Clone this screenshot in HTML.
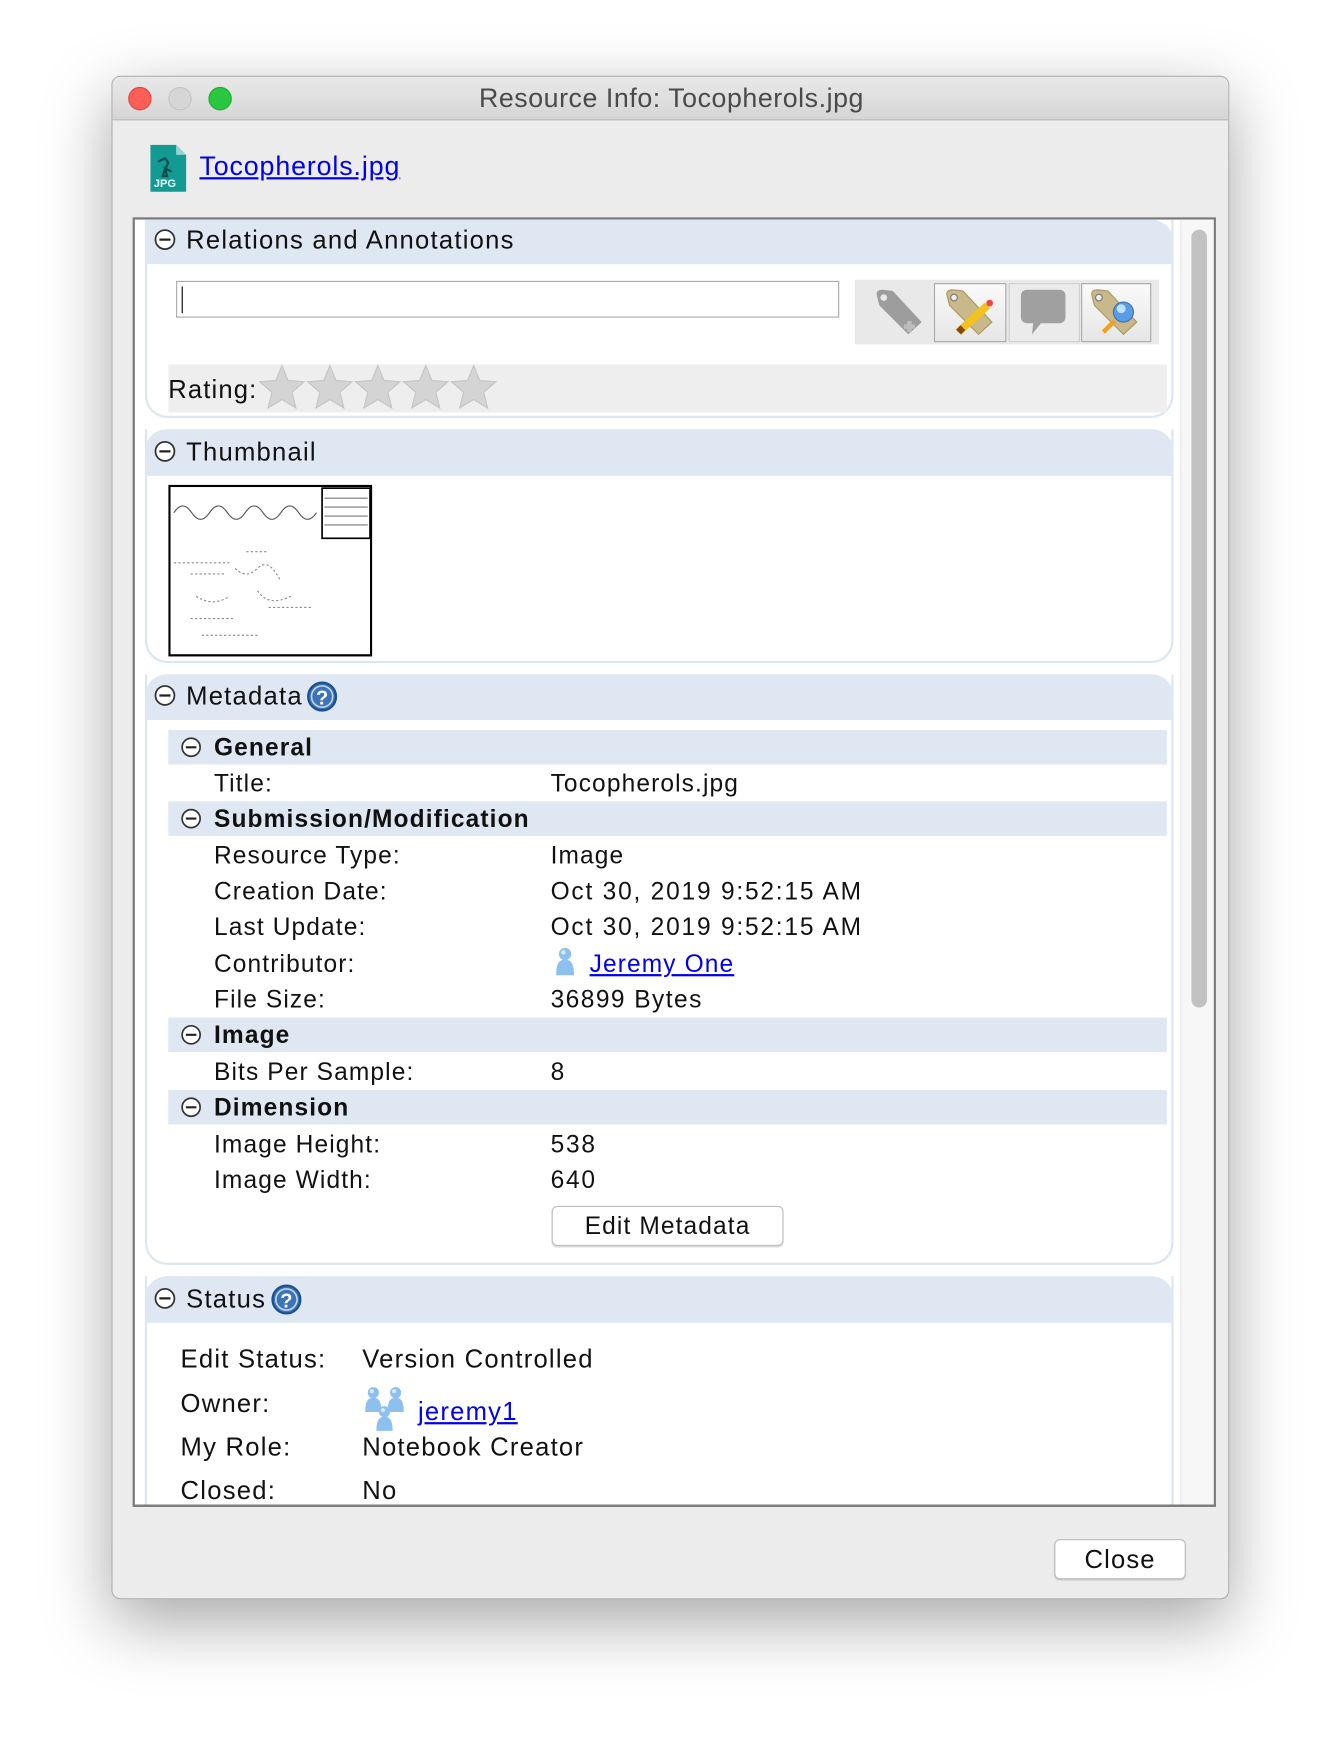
<!DOCTYPE html>
<html><head><meta charset="utf-8">
<style>
html,body{margin:0;padding:0;background:#fff;width:1340px;height:1746px;overflow:hidden}
#s{position:absolute;left:0;top:0;width:1200px;height:1564px;transform:scale(1.1145);transform-origin:0 0;font-family:"Liberation Sans","DejaVu Sans",sans-serif;color:#111}
.a{position:absolute}
.win{left:100px;top:68px;width:1003px;height:1367px;background:#ececec;border:1px solid #b0b0b0;border-radius:8px;box-shadow:0 20px 60px rgba(0,0,0,.35);box-sizing:border-box;overflow:hidden}
.tb{left:0;top:0;width:1003px;height:39px;background:linear-gradient(#e9e9e9,#d5d5d5);border-bottom:1px solid #b5b5b5;box-sizing:border-box}
.tl{width:21px;height:21px;border-radius:50%;top:9px}
.t{font-size:22px;white-space:nowrap;letter-spacing:1px}
.h{font-size:23px;letter-spacing:1.1px}
.hdr{background:#dfe8f2}
.bd{font-weight:bold}
a{color:#0000ee;text-decoration:underline}
.btn{background:#fff;border:1px solid #bdbdbd;border-radius:5px;box-shadow:0 1px 1px rgba(0,0,0,.15);box-sizing:border-box;text-align:center}
</style></head><body><div id="s">
<div class="a win">
 <div class="a tb">
  <div class="a tl" style="left:14px;background:#fc5f57;border:1px solid #e0443e;box-sizing:border-box"></div>
  <div class="a tl" style="left:50px;background:#d6d6d6;border:1px solid #c4c4c4;box-sizing:border-box"></div>
  <div class="a tl" style="left:86px;background:#29c740;border:1px solid #1daa2f;box-sizing:border-box"></div>
  <div class="a t" style="left:0;width:1003px;text-align:center;top:6px;color:#4a4a4a;font-size:24px;letter-spacing:.5px">Resource Info: Tocopherols.jpg</div>
 </div>
</div>
<svg class="a" style="left:134px;top:129px" width="34" height="44" viewBox="0 0 34 44"><path d="M1 1H24L33 10V43H1Z" fill="#139a92"/><path d="M24 1V10H33" fill="#8fd6d1"/><path d="M8 16l6-3 3 4-3 6-2 6h4l-2-7 6 3" stroke="#0b4f4a" stroke-width="2" fill="none"/><text x="4" y="39" font-size="10" font-family="Liberation Sans" fill="#e6fffd" font-weight="bold">JPG</text></svg>
<div class="a t" style="left:179px;top:136px;font-size:24px;letter-spacing:.8px"><a>Tocopherols.jpg</a></div>
<div class="a" style="left:119px;top:195px;width:972px;height:1157px;border:2px solid #7a7a7a;box-sizing:border-box;background:#fff;overflow:hidden">
 <div class="a" style="left:938px;top:0;width:32px;height:1153px;background:#f7f7f7;border-left:1px solid #e6e6e6"></div>
 <div class="a" style="left:948px;top:9px;width:14px;height:698px;background:#c2c2c2;border-radius:7px"></div>
</div>
<svg width="0" height="0" style="position:absolute"><defs>
<symbol id="m" viewBox="0 0 20 20"><circle cx="10" cy="10" r="8.5" fill="#fff" stroke="#333" stroke-width="1.6"/><path d="M5 10H15" stroke="#222" stroke-width="2"/></symbol>
<symbol id="q" viewBox="0 0 28 28"><circle cx="14" cy="14" r="12.5" fill="#3d74b8" stroke="#1e4f8f" stroke-width="2"/><circle cx="14" cy="14" r="9.5" fill="none" stroke="#bcd4f0" stroke-width="1.5"/><text x="14" y="21" text-anchor="middle" font-size="18" font-weight="bold" fill="#fff" font-family="Liberation Sans">?</text></symbol>
<symbol id="st" viewBox="0 0 44 42"><path d="M22 2L27.5 15.5 42 16.5 31 26 34.5 40 22 32.5 9.5 40 13 26 2 16.5 16.5 15.5Z" fill="#d4d4d4" stroke="#c4c4c4"/></symbol>
<symbol id="p" viewBox="0 0 22 28"><circle cx="11" cy="7" r="5.5" fill="#8dc0ef"/><path d="M3 26C3 15 6 12 11 12S19 15 19 26Z" fill="#8dc0ef"/><circle cx="9.5" cy="5.5" r="2" fill="#d9ecfc"/></symbol>
</defs></svg>
<div class="a" style="left:130px;top:197px;width:923px;height:178px;border:2px solid #dce6f1;border-top:none;border-radius:0 0 20px 20px;box-sizing:border-box"></div>
<div class="a hdr" style="left:130px;top:197px;width:923px;height:40px;border-radius:0 20px 0 0"></div>
<svg class="a" style="left:138px;top:205px" width="20" height="20"><use href="#m"/></svg>
<div class="a t h" style="left:167px;top:202px">Relations and Annotations</div>
<div class="a" style="left:158px;top:252px;width:595px;height:33px;border:1px solid #a9a9a9;background:#fff;box-sizing:border-box"><div class="a" style="left:4px;top:4px;width:1px;height:24px;background:#000"></div></div>
<div class="a" style="left:767px;top:251px;width:273px;height:58px;background:#e9e9e9"></div>
<svg class="a" style="left:783px;top:258px" width="46" height="44" viewBox="0 0 46 44"><path d="M4 8Q2 2 9 2L18 3 44 31 32 42 6 16Z" fill="#9d9d9d"/><circle cx="10" cy="9" r="3" fill="#e9e9e9"/><path d="M33 30v10M28 35h10" stroke="#bdbdbd" stroke-width="4"/></svg>
<div class="a" style="left:838px;top:254px;width:65px;height:53px;border:1px solid #a9a9a9;background:linear-gradient(#fafafa,#e6e6e6);box-sizing:border-box"></div>
<svg class="a" style="left:846px;top:258px" width="50" height="46" viewBox="0 0 50 46"><path d="M4 8Q2 2 9 2L18 3 44 31 32 42 6 16Z" fill="#c9b98a" stroke="#a89760"/><circle cx="10" cy="9" r="3" fill="#eee" stroke="#777"/><path d="M14 40L40 16" stroke="#f3c21f" stroke-width="7"/><path d="M14 40L18 36" stroke="#8a4a00" stroke-width="6"/><circle cx="42" cy="14" r="3" fill="#e44"/></svg>
<div class="a" style="left:905px;top:254px;width:64px;height:53px;border:1px solid #cfcfcf;background:#ebebeb;box-sizing:border-box"></div>
<svg class="a" style="left:914px;top:258px" width="46" height="46" viewBox="0 0 46 46"><path d="M8 2H36Q42 2 42 8V26Q42 32 36 32H20L12 42 13 32H8Q2 32 2 26V8Q2 2 8 2Z" fill="#a0a0a0"/></svg>
<div class="a" style="left:970px;top:254px;width:63px;height:53px;border:1px solid #a9a9a9;background:linear-gradient(#fafafa,#e6e6e6);box-sizing:border-box"></div>
<svg class="a" style="left:976px;top:258px" width="50" height="46" viewBox="0 0 50 46"><path d="M4 8Q2 2 9 2L18 3 44 31 32 42 6 16Z" fill="#c9b98a" stroke="#a89760"/><circle cx="10" cy="9" r="3" fill="#eee" stroke="#777"/><path d="M14 40L24 30" stroke="#f3a21f" stroke-width="4"/><circle cx="32" cy="22" r="9" fill="#5a9be6" stroke="#3a6fb8"/><circle cx="30" cy="19" r="4" fill="#bfe0ff"/></svg>
<div class="a" style="left:151px;top:327px;width:896px;height:43px;background:#eeeeee"></div>
<div class="a t" style="left:151px;top:336px;font-size:23px">Rating:</div>
<svg class="a" style="left:231px;top:326px" width="216" height="44"><use href="#st" x="0" width="44" height="42"/><use href="#st" x="43" width="44" height="42"/><use href="#st" x="86" width="44" height="42"/><use href="#st" x="129" width="44" height="42"/><use href="#st" x="172" width="44" height="42"/></svg>
<div class="a" style="left:130px;top:385px;width:923px;height:210px;border:2px solid #dce6f1;border-top:none;border-radius:0 0 20px 20px;box-sizing:border-box"></div>
<div class="a hdr" style="left:130px;top:385px;width:923px;height:42px;border-radius:20px 20px 0 0"></div>
<svg class="a" style="left:138px;top:395px" width="20" height="20"><use href="#m"/></svg>
<div class="a t h" style="left:167px;top:392px">Thumbnail</div>
<svg class="a" style="left:151px;top:435px" width="183" height="154" viewBox="0 0 183 154"><rect x="1" y="1" width="181" height="152" fill="#fff" stroke="#000" stroke-width="2"/><rect x="138" y="3" width="43" height="45" fill="none" stroke="#000" stroke-width="1.5"/><path d="M140 12h39M140 20h39M140 28h39M140 36h39" stroke="#777"/><path d="M5 25q8-12 16 0t16 0 16 0 16 0 16 0 16 0 16 0 16 0" stroke="#555" fill="none"/><path d="M5 70h50M20 80h30M60 75q10 10 20 0t20 10M25 100q15 10 30 0M80 95q10 15 30 5M20 120h40M30 135h50M90 110h40M70 60h20" stroke="#888" stroke-dasharray="2 2" fill="none"/></svg>
<div class="a" style="left:130px;top:605px;width:923px;height:530px;border:2px solid #dce6f1;border-top:none;border-radius:0 0 20px 20px;box-sizing:border-box"></div>
<div class="a hdr" style="left:130px;top:605px;width:923px;height:41px;border-radius:20px 20px 0 0"></div>
<svg class="a" style="left:138px;top:614px" width="20" height="20"><use href="#m"/></svg>
<div class="a t h" style="left:167px;top:611px">Metadata</div>
<svg class="a" style="left:275px;top:611px" width="28" height="28"><use href="#q"/></svg>
<div class="a hdr" style="left:151px;top:655px;width:896px;height:31px"></div>
<div class="a hdr" style="left:151px;top:719px;width:896px;height:31px"></div>
<div class="a hdr" style="left:151px;top:913px;width:896px;height:31px"></div>
<div class="a hdr" style="left:151px;top:978px;width:896px;height:31px"></div>
<svg class="a" style="left:162px;top:661px" width="19" height="19"><use href="#m"/></svg>
<svg class="a" style="left:162px;top:725px" width="19" height="19"><use href="#m"/></svg>
<svg class="a" style="left:162px;top:919px" width="19" height="19"><use href="#m"/></svg>
<svg class="a" style="left:162px;top:984px" width="19" height="19"><use href="#m"/></svg>
<div class="a t bd" style="left:192px;top:658px">General</div>
<div class="a t bd" style="left:192px;top:722px">Submission/Modification</div>
<div class="a t bd" style="left:192px;top:916px">Image</div>
<div class="a t bd" style="left:192px;top:981px">Dimension</div>
<div class="a t" style="left:192px;top:690px">Title:</div><div class="a t" style="left:494px;top:690px">Tocopherols.jpg</div>
<div class="a t" style="left:192px;top:755px">Resource Type:</div><div class="a t" style="left:494px;top:755px">Image</div>
<div class="a t" style="left:192px;top:787px">Creation Date:</div><div class="a t" style="left:494px;top:787px;letter-spacing:1.6px">Oct 30, 2019 9:52:15 AM</div>
<div class="a t" style="left:192px;top:819px">Last Update:</div><div class="a t" style="left:494px;top:819px;letter-spacing:1.6px">Oct 30, 2019 9:52:15 AM</div>
<div class="a t" style="left:192px;top:852px">Contributor:</div>
<svg class="a" style="left:496px;top:849px" width="22" height="28"><use href="#p"/></svg>
<div class="a t" style="left:529px;top:852px"><a>Jeremy One</a></div>
<div class="a t" style="left:192px;top:884px">File Size:</div><div class="a t" style="left:494px;top:884px;letter-spacing:1.3px">36899 Bytes</div>
<div class="a t" style="left:192px;top:949px">Bits Per Sample:</div><div class="a t" style="left:494px;top:949px">8</div>
<div class="a t" style="left:192px;top:1014px">Image Height:</div><div class="a t" style="left:494px;top:1014px;letter-spacing:1.6px">538</div>
<div class="a t" style="left:192px;top:1046px">Image Width:</div><div class="a t" style="left:494px;top:1046px;letter-spacing:1.6px">640</div>
<div class="a btn t" style="left:495px;top:1082px;width:208px;height:36px;line-height:34px">Edit Metadata</div>
<div class="a" style="left:130px;top:1145px;width:923px;height:205px;border-left:2px solid #dce6f1;border-right:2px solid #dce6f1;box-sizing:border-box"></div>
<div class="a hdr" style="left:130px;top:1145px;width:923px;height:42px;border-radius:20px 20px 0 0"></div>
<svg class="a" style="left:138px;top:1155px" width="20" height="20"><use href="#m"/></svg>
<div class="a t h" style="left:167px;top:1152px">Status</div>
<svg class="a" style="left:243px;top:1152px" width="28" height="28"><use href="#q"/></svg>
<div class="a t h" style="left:162px;top:1206px">Edit Status:</div><div class="a t h" style="left:325px;top:1206px">Version Controlled</div>
<div class="a t h" style="left:162px;top:1246px">Owner:</div>
<svg class="a" style="left:325px;top:1243px" width="42" height="46" viewBox="0 0 42 46"><use href="#p" x="0" y="0" width="20" height="26"/><use href="#p" x="20" y="0" width="20" height="26"/><use href="#p" x="10" y="16" width="20" height="28"/></svg>
<div class="a t h" style="left:375px;top:1253px"><a>jeremy1</a></div>
<div class="a t h" style="left:162px;top:1285px">My Role:</div><div class="a t h" style="left:325px;top:1285px">Notebook Creator</div>
<div class="a t h" style="left:162px;top:1324px">Closed:</div><div class="a t h" style="left:325px;top:1324px">No</div>
<div class="a" style="left:119px;top:1350px;width:972px;height:2px;background:#7a7a7a"></div>
<div class="a btn t" style="left:946px;top:1381px;width:118px;height:36px;line-height:34px;font-size:23px">Close</div>
</div></body></html>
